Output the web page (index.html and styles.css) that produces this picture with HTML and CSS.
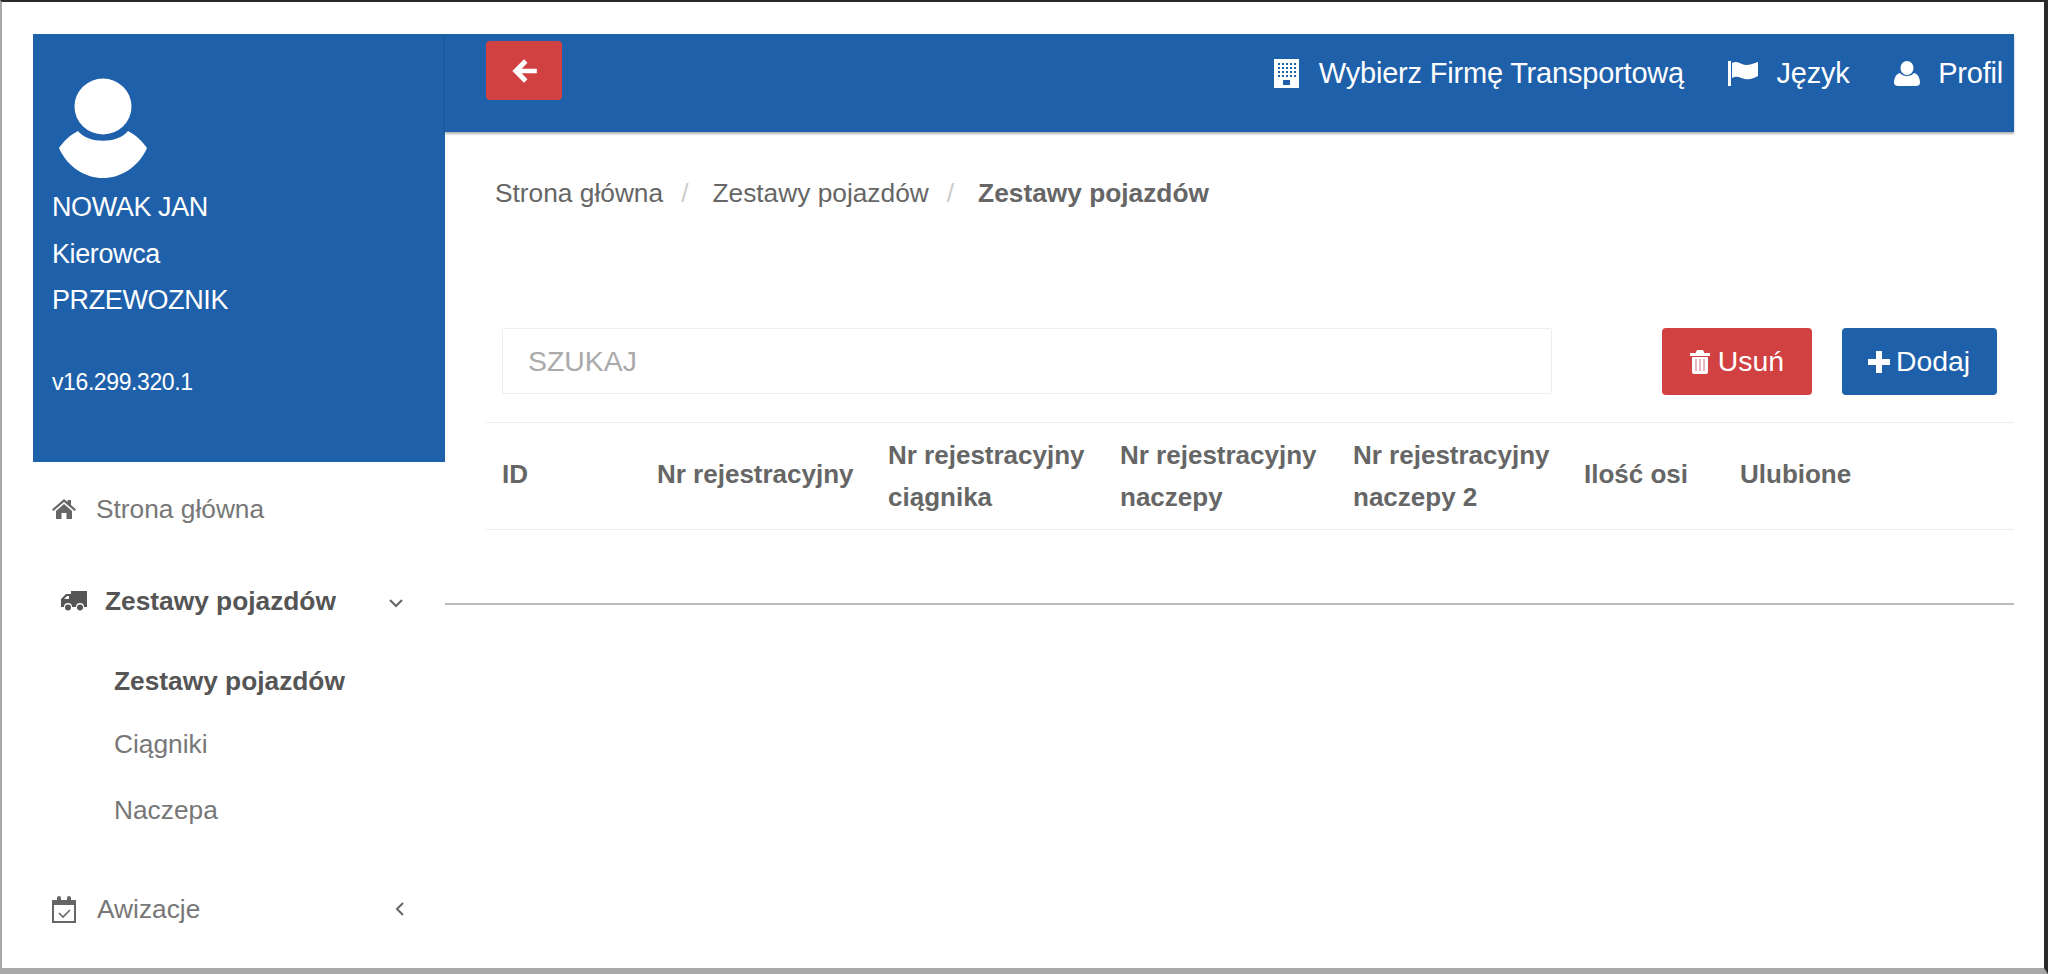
FILE: index.html
```html
<!DOCTYPE html>
<html>

<head>
    <title>Zestawy pojazdów</title>
    <link rel="stylesheet" href="styles.css">
</head>

<body>
    <div class="frame">
        <div class="sidebar">
            <div class="profile">
                <svg class="avatar" viewBox="0 0 90 104">
                    <ellipse cx="45" cy="30.5" rx="28.5" ry="28" fill="#fff" />
                    <path d="M20 55 C30 68 60 68 70 55 C78 59 85 66 89 72 C80 92 62 102 45 102 C28 102 10 92 1 72 C5 66 12 59 20 55 Z" fill="#fff" />
                </svg>
                <div class="profile-line">NOWAK JAN</div>
                <div class="profile-line">Kierowca</div>
                <div class="profile-line">PRZEWOZNIK</div>
                <div class="version">v16.299.320.1</div>
            </div>
            <ul class="menu">
                <li class="menu-item home-item">
                    <svg class="menu-icon" viewBox="0 0 24 20">
                        <path d="M12 0 L15.5 3 V1 H19 V6 L24 10.5 L22.6 12 L12 3 L1.4 12 L0 10.5 Z M4 12 L12 5 L20 12 V20 H14.5 V14 H9.5 V20 H4 Z" fill="#666" />
                    </svg>
                    <span>Strona główna</span>
                </li>
                <li class="menu-item open-item">
                    <svg class="menu-icon truck" viewBox="0 0 26 20">
                        <path d="M10 0 H26 V16 H23 A4 4 0 0 0 15 16 H11 A4 4 0 0 0 3 16 H0 V8 L5 3 H10 Z M3 8 H8 V5 H6 Z" fill="#555" fill-rule="evenodd" />
                        <circle cx="7" cy="16.5" r="3" fill="#555" />
                        <circle cx="19" cy="16.5" r="3" fill="#555" />
                    </svg>
                    <span>Zestawy pojazdów</span>
                    <svg class="chevron down" viewBox="0 0 16 10">
                        <path d="M2 2 L8 8 L14 2" fill="none" stroke="#666" stroke-width="2" />
                    </svg>
                </li>
                <li class="sub-item sub-active">Zestawy pojazdów</li>
                <li class="sub-item sub-second">Ciągniki</li>
                <li class="sub-item sub-third">Naczepa</li>
                <li class="menu-item last-item">
                    <svg class="menu-icon" viewBox="0 0 24 27">
                        <path d="M1 5 H23 V26 H1 Z" fill="none" stroke="#666" stroke-width="2" />
                        <path d="M1 6 H23 V9 H1 Z" fill="#666" />
                        <rect x="5" y="0" width="4" height="6" rx="2" fill="#666" />
                        <rect x="15" y="0" width="4" height="6" rx="2" fill="#666" />
                        <path d="M7 17 L11 21 L18 14" fill="none" stroke="#666" stroke-width="1.6" />
                    </svg>
                    <span>Awizacje</span>
                    <svg class="chevron left" viewBox="0 0 10 16">
                        <path d="M8 2 L2 8 L8 14" fill="none" stroke="#666" stroke-width="2" />
                    </svg>
                </li>
            </ul>
        </div>
        <div class="main">
            <div class="topbar">
                <button class="back-btn">
                    <svg viewBox="0 0 24 24" width="28" height="28">
                        <path d="M12 2 L15 5 L10 10 H23 V14 H10 L15 19 L12 22 L2 12 Z" fill="#fff" />
                    </svg>
                </button>
                <div class="top-links">
                    <a class="top-link">
                        <svg class="building" viewBox="0 0 25 29">
                            <path d="M0 0 H25 V29 H0 Z" fill="#fff" />
                            <g fill="#1f60aa">
                                <rect x="4" y="4" width="2" height="2" /><rect x="8" y="4" width="2" height="2" /><rect x="12" y="4" width="2" height="2" /><rect x="16" y="4" width="2" height="2" /><rect x="20" y="4" width="2" height="2" />
                                <rect x="4" y="8" width="2" height="2" /><rect x="8" y="8" width="2" height="2" /><rect x="12" y="8" width="2" height="2" /><rect x="16" y="8" width="2" height="2" /><rect x="20" y="8" width="2" height="2" />
                                <rect x="4" y="12" width="2" height="2" /><rect x="8" y="12" width="2" height="2" /><rect x="12" y="12" width="2" height="2" /><rect x="16" y="12" width="2" height="2" /><rect x="20" y="12" width="2" height="2" />
                                <rect x="4" y="16" width="2" height="2" /><rect x="8" y="16" width="2" height="2" /><rect x="12" y="16" width="2" height="2" /><rect x="16" y="16" width="2" height="2" /><rect x="20" y="16" width="2" height="2" />
                                <rect x="9" y="21" width="7" height="5" />
                            </g>
                        </svg>
                        <span>Wybierz Firmę Transportową</span>
                    </a>
                    <a class="top-link">
                        <svg class="flag" viewBox="0 0 30 25">
                            <path d="M0 0 H3 V25 H0 Z" fill="#fff" />
                            <path d="M4 2 C10 -1 13 4 18 4 C22 4 26 2 30 1 V15 C26 17 22 19 17 18 C13 17 9 14 4 17 Z" fill="#fff" />
                        </svg>
                        <span>Język</span>
                    </a>
                    <a class="top-link">
                        <svg class="user" viewBox="0 0 26 25">
                            <ellipse cx="13" cy="7" rx="6.5" ry="7" fill="#fff" />
                            <path d="M6 12 C9 16 17 16 20 12 C24 13 26 17 26 22 C26 24 24 25 22 25 H4 C2 25 0 24 0 22 C0 17 2 13 6 12 Z" fill="#fff" />
                        </svg>
                        <span>Profil</span>
                    </a>
                </div>
            </div>
            <div class="breadcrumb">
                <span>Strona główna</span>
                <span class="sep">/</span>
                <span>Zestawy pojazdów</span>
                <span class="sep">/</span>
                <b>Zestawy pojazdów</b>
            </div>
            <div class="toolbar">
                <input class="search" type="text" placeholder="SZUKAJ">
                <button class="btn btn-red">
                    <svg viewBox="0 0 20 24" width="20" height="26">
                        <path d="M7 0 H13 L14.5 3 H20 V6 H0 V3 H5.5 Z" fill="#fff" />
                        <path d="M2 7 H18 V22 C18 23 17 24 16 24 H4 C3 24 2 23 2 22 Z" fill="#fff" />
                        <path d="M6 9 V21 M10 9 V21 M14 9 V21" stroke="#e6a3ad" stroke-width="1.6" />
                    </svg>
                    <span>Usuń</span>
                </button>
                <button class="btn btn-blue">
                    <svg viewBox="0 0 24 24" width="24" height="24">
                        <path d="M9 1 H15 V9 H23 V15 H15 V23 H9 V15 H1 V9 H9 Z" fill="#fff" />
                    </svg>
                    <span>Dodaj</span>
                </button>
            </div>
            <div class="table-head">
                <div class="one-line">ID</div>
                <div class="one-line">Nr rejestracyjny</div>
                <div>Nr rejestracyjny<br>ciągnika</div>
                <div>Nr rejestracyjny<br>naczepy</div>
                <div>Nr rejestracyjny<br>naczepy 2</div>
                <div class="one-line">Ilość osi</div>
                <div class="one-line">Ulubione</div>
            </div>
            <div class="table-end"></div>
        </div>
    </div>
</body>

</html>
```

FILE: styles.css
```css
/* General Styles */
html,
body {
    margin: 0;
    padding: 0;
    background-color: #fff;
}

body {
    font-family: "Liberation Sans", Arial, sans-serif;
    color: #666;
}

.frame {
    display: flex;
    height: 974px;
    box-sizing: border-box;
    padding: 32px 30px 0 31px;
    border-top: 2px solid #2a2a2a;
    border-left: 2px solid #a8a8a8;
    border-right: 4px solid #2a2a2a;
    border-bottom: 6px solid #a8a8a8;
    overflow: hidden;
}

/* Sidebar */
.sidebar {
    width: 412px;
    flex-shrink: 0;
}

.profile {
    height: 428px;
    box-sizing: border-box;
    padding: 42px 0 0 19px;
    background-color: #1f60aa;
    color: #fff;
}

.avatar {
    display: block;
    width: 90px;
    height: 104px;
    margin-left: 6px;
    margin-bottom: 4px;
}

.profile-line {
    height: 46.5px;
    line-height: 46.5px;
    font-size: 27px;
    letter-spacing: -0.4px;
}

.version {
    margin-top: 43px;
    line-height: 30px;
    font-size: 23px;
    letter-spacing: -0.4px;
}

.menu {
    list-style: none;
    margin: 0;
    padding: 0;
}

.menu-item {
    display: flex;
    align-items: center;
    font-size: 26.3px;
    color: #777;
}

.menu-icon {
    width: 24px;
    height: 20px;
    margin-right: 20px;
    flex-shrink: 0;
}

.home-item {
    height: 94px;
    padding-left: 19px;
}

.open-item {
    height: 90px;
    padding-left: 28px;
    font-weight: bold;
    color: #555;
}

.truck {
    width: 26px;
    margin-right: 18px;
}

.chevron {
    margin-left: auto;
}

.down {
    width: 16px;
    height: 10px;
    margin-right: 41px;
    margin-top: 4px;
}

.left {
    width: 10px;
    height: 16px;
    margin-right: 40px;
}

.sub-item {
    padding-left: 81px;
    font-size: 26.3px;
    line-height: 30px;
    color: #777;
}

.sub-active {
    margin-top: 20px;
    font-weight: bold;
    color: #555;
}

.sub-second {
    margin-top: 33px;
}

.sub-third {
    margin-top: 36px;
}

.last-item {
    height: 60px;
    margin-top: 54px;
    padding-left: 19px;
}

.last-item .menu-icon {
    height: 27px;
    margin-right: 21px;
}

/* Main */
.main {
    flex: 1;
    min-width: 0;
}

.topbar {
    display: flex;
    align-items: flex-start;
    justify-content: space-between;
    height: 98px;
    padding: 7px 11px 0 41px;
    box-sizing: border-box;
    background-color: #1f60aa;
    box-shadow: 0 2px 2px rgba(0, 0, 0, 0.3);
}

.back-btn {
    display: flex;
    align-items: center;
    justify-content: center;
    width: 76px;
    height: 59px;
    padding: 0;
    border: none;
    border-radius: 4px;
    background-color: #d14141;
}

.top-links {
    display: flex;
    gap: 44.5px;
    height: 64px;
    align-items: center;
}

.top-link {
    display: flex;
    align-items: center;
    font-size: 29px;
    letter-spacing: -0.2px;
    color: #fff;
}

.building {
    width: 25px;
    height: 29px;
    margin-right: 20px;
}

.flag {
    width: 30px;
    height: 25px;
    margin-right: 18px;
}

.user {
    width: 26px;
    height: 25px;
    margin-right: 18px;
}

.breadcrumb {
    display: flex;
    align-items: center;
    height: 30px;
    margin: 46px 0 0 50px;
    font-size: 26.3px;
    color: #666;
}

.sep {
    margin: 0 24px 0 18px;
    color: #ccc;
}

.toolbar {
    display: flex;
    align-items: flex-start;
    margin: 120px 0 0 57px;
}

.search {
    width: 1050px;
    height: 66px;
    box-sizing: border-box;
    padding: 0 25px;
    border: 1px solid #eee;
    border-radius: 2px;
    font-family: inherit;
    font-size: 28.4px;
}

.search::placeholder {
    color: #aaa;
}

.btn {
    display: flex;
    align-items: center;
    justify-content: center;
    height: 67px;
    padding: 0;
    border: none;
    border-radius: 4px;
    font-family: inherit;
    font-size: 28.4px;
    color: #fff;
}

.btn-red {
    gap: 8px;
    width: 150px;
    margin-left: 110px;
    background-color: #d14141;
}

.btn-blue {
    gap: 5px;
    width: 155px;
    padding-right: 2px;
    margin-left: 30px;
    background-color: #1f60aa;
}

/* Table header */
.table-head {
    display: grid;
    grid-template-columns: 155px 231px 232px 233px 231px 156px auto;
    align-items: center;
    height: 106px;
    margin: 27px 0 0 41px;
    padding-left: 16px;
    border-top: 1px solid #eee;
    border-bottom: 1px solid #eee;
    font-size: 26px;
    font-weight: bold;
    line-height: 42px;
    color: #666;
}

.one-line {
    margin-bottom: 4px;
}

.table-end {
    height: 73px;
    border-bottom: 2px solid #bbb;
}
```
